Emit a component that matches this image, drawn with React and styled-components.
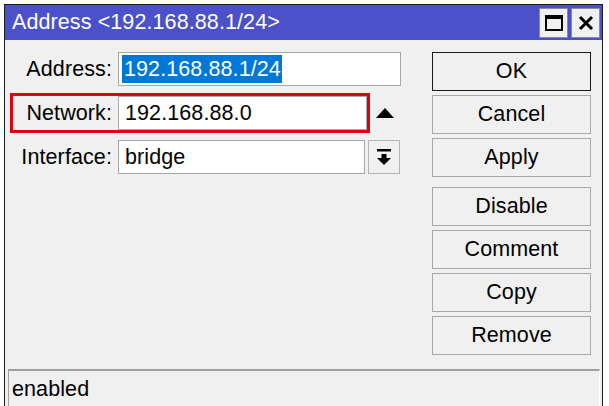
import styled, { createGlobalStyle } from "styled-components";

const GlobalStyle = createGlobalStyle`
  html, body {
    margin: 0;
    padding: 0;
    background: #ffffff;
    overflow: hidden;
  }
  body {
    font-family: "Liberation Sans", Arial, sans-serif;
  }
`;

const Window = styled.div`
  margin: 4px 0 0 4px;
  width: 597px;
  height: 410px;
  border: 1px solid #1b1b1b;
  background: #f0f0f0;
  display: flex;
  flex-direction: column;
  font-size: 21.5px;
  letter-spacing: 0.1px;
  color: #000;
`;

const TitleBar = styled.div`
  height: 35px;
  background: #4b51c8;
  display: flex;
  align-items: center;
  padding: 0 2px 0 7px;
  color: #fff;
`;

const Title = styled.div`
  flex: 1;
  padding-bottom: 1px;
`;

const TitleButton = styled.div`
  width: 27px;
  height: 28px;
  margin-left: 3px;
  background: #f0f0f0;
  border: 1px solid #8a8a9a;
  display: flex;
  align-items: center;
  justify-content: center;
`;

const Body = styled.div`
  display: flex;
  padding: 9px 11px 14px 5px;
  gap: 28px;
`;

const Form = styled.div`
  flex: 1;
  display: flex;
  flex-direction: column;
  gap: 4px;
`;

const Row = styled.div`
  display: flex;
  align-items: center;
  height: 40px;
`;

const FieldBox = styled.div`
  flex: 1;
  display: flex;
  height: 34px;
  border: 3px solid ${(p) => (p.$highlight ? "#e0000e" : "transparent")};
`;

const Label = styled.div`
  width: 105px;
  flex: none;
  text-align: right;
  padding-right: 6px;
  box-sizing: border-box;
  line-height: 34px;
`;

const Input = styled.div`
  flex: 1;
  background: #fff;
  border: 1px solid #a8a8a8;
  padding-left: ${(p) => (p.$selected ? "3px" : "6px")};
  line-height: 32px;
  white-space: nowrap;
  overflow: hidden;
`;

const Selected = styled.span`
  display: inline-block;
  background: #0078d7;
  color: #fff;
  line-height: 28px;
  padding: 0 1px 0 2px;
  vertical-align: top;
  margin-top: 2px;
`;

const Extra = styled.div`
  width: ${(p) => p.$width}px;
  flex: none;
  height: 34px;
  margin-right: 4px;
  display: flex;
  align-items: center;
  justify-content: center;
`;

const DropButton = styled(Extra)`
  box-sizing: border-box;
  border: 1px solid #b4b4b4;
  background: #f0f0f0;
`;

const Buttons = styled.div`
  width: 159px;
  display: flex;
  flex-direction: column;
  gap: 4px;
  padding-top: 3px;
`;

const Button = styled.div`
  height: 39px;
  box-sizing: border-box;
  border: 1px solid ${(p) => (p.$default ? "#1b1b1b" : "#a8a8a8")};
  background: #f0f0f0;
  display: flex;
  align-items: center;
  justify-content: center;
  margin-top: ${(p) => (p.$spaced ? "6px" : "0")};
`;

const StatusBar = styled.div`
  margin: 0 2px 0 3px;
  flex: 1;
  border-top: 2px solid #a0a0a0;
  border-left: 1px solid #a0a0a0;
  border-right: 1px solid #fdfdfd;
  padding: 6px 0 0 3px;
`;

const UpTriangle = () => (
  <svg width="18" height="10" viewBox="0 0 18 10">
    <polygon points="0,10 18,10 9,0" fill="#000" />
  </svg>
);

const DropIcon = () => (
  <svg width="14" height="17" viewBox="0 0 14 17">
    <rect x="0" y="0" width="14" height="2.5" fill="#000" />
    <rect x="4.5" y="5" width="5" height="4" fill="#000" />
    <polygon points="0,9 14,9 7,16" fill="#000" />
  </svg>
);

const MaxIcon = () => (
  <svg width="18" height="16" viewBox="0 0 18 16">
    <rect x="1" y="1.5" width="16" height="13.5" fill="none" stroke="#000" strokeWidth="2" />
    <rect x="0" y="0" width="18" height="4" fill="#000" />
  </svg>
);

const CloseIcon = () => (
  <svg width="16" height="16" viewBox="0 0 16 16">
    <path d="M2 2 L14 14 M14 2 L2 14" stroke="#000" strokeWidth="3" />
  </svg>
);

const buttons = ["OK", "Cancel", "Apply", "Disable", "Comment", "Copy", "Remove"];

export default function App() {
  return (
    <>
      <GlobalStyle />
      <Window>
        <TitleBar>
          <Title>Address &lt;192.168.88.1/24&gt;</Title>
          <TitleButton>
            <MaxIcon />
          </TitleButton>
          <TitleButton>
            <CloseIcon />
          </TitleButton>
        </TitleBar>
        <Body>
          <Form>
            <Row>
              <FieldBox>
                <Label>Address:</Label>
                <Input $selected>
                  <Selected>192.168.88.1/24</Selected>
                </Input>
              </FieldBox>
            </Row>
            <Row>
              <FieldBox $highlight>
                <Label>Network:</Label>
                <Input>192.168.88.0</Input>
              </FieldBox>
              <Extra $width={30}>
                <UpTriangle />
              </Extra>
            </Row>
            <Row>
              <FieldBox>
                <Label>Interface:</Label>
                <Input>bridge</Input>
              </FieldBox>
              <DropButton $width={32}>
                <DropIcon />
              </DropButton>
            </Row>
          </Form>
          <Buttons>
            {buttons.map((b, i) => (
              <Button key={b} $default={i === 0} $spaced={b === "Disable"}>
                {b}
              </Button>
            ))}
          </Buttons>
        </Body>
        <StatusBar>enabled</StatusBar>
      </Window>
    </>
  );
}
